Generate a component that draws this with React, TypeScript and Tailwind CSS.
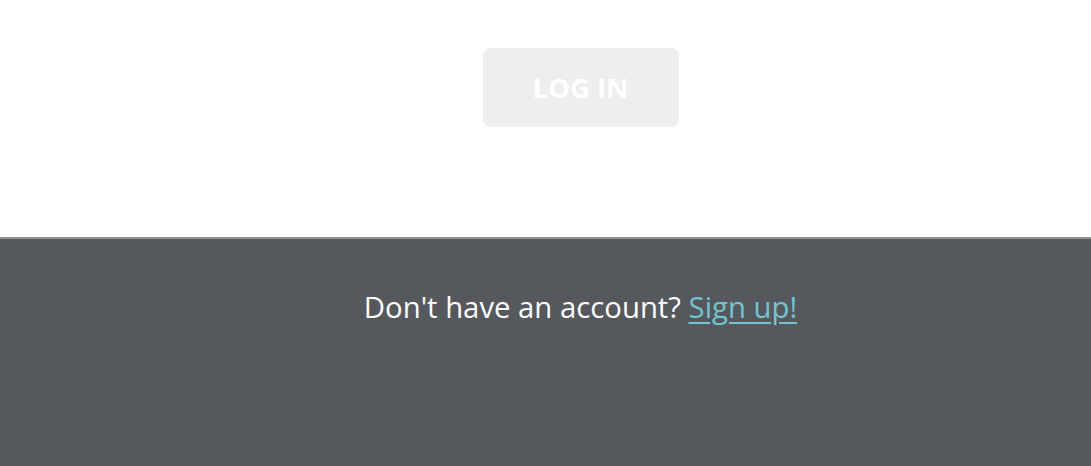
export default function App() {
  return (
    <div className="flex h-[466px] w-full flex-col bg-white font-['Open_Sans',sans-serif]">
      <div className="flex h-[237px] justify-center pl-[70px] pt-[48px]">
        <button className="h-[79px] w-[196px] rounded-[8px] bg-[#eeeef0] text-[27.5px] font-bold text-white">
          LOG IN
        </button>
      </div>
      <div className="flex flex-1 justify-center border-t-2 border-[#8f8f8f] bg-[#55585d] pl-[70px] pt-[48px]">
        <p className="text-[29.3px] leading-[40px] text-white">
          Don't have an account?{" "}
          <a href="#" className="text-[#73c5cd] underline underline-offset-4">
            Sign up!
          </a>
        </p>
      </div>
    </div>
  )
}
